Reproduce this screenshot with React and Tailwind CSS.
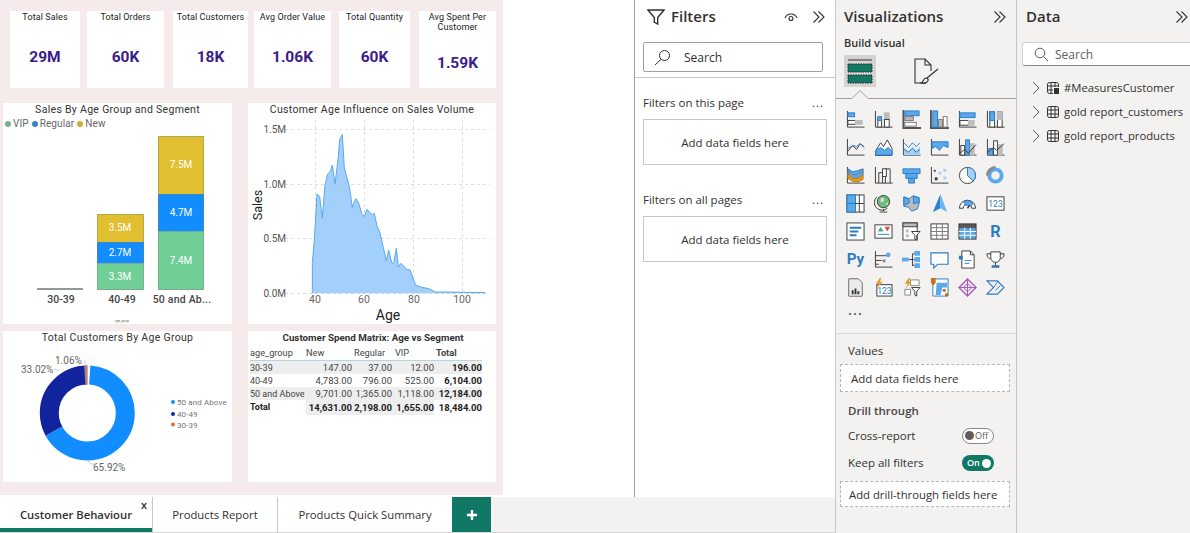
import React from 'react';

const D = '#3b3a39';
const B = '#5ba8ec';
const S = '#2b7cc4';
const G = '#bcbcbc';
const W = '#ffffff';

const Ax = () => <path d="M1.5 1v17h18" fill="none" stroke={D} strokeWidth="1" />;
const Bx = ({ x, y, w, h, f = W, s = D }) => <rect x={x} y={y} width={w} height={h} fill={f} stroke={s} strokeWidth="1" />;

const vizIcons = [
  <><Ax /><Bx x={2} y={3} w={7} h={4} f={B} s={S} /><Bx x={2} y={11} w={8} h={4} /><Bx x={10} y={11} w={7} h={4} f={G} s={G} /></>,
  <><Ax /><Bx x={4} y={9} w={4} h={9} /><Bx x={4} y={7} w={4} h={4} f={B} s={S} /><Bx x={11} y={3} w={5} h={7} f={G} s={G} /><Bx x={11} y={10} w={5} h={8} f={W} s={D} /></>,
  <><path d="M1.5 0v19h19" fill="none" stroke="#555" strokeWidth="2" /><Bx x={3} y={1} w={15} h={5} f={B} s={S} /><Bx x={3} y={7} w={9} h={4} f={G} s="#777" /><Bx x={3} y={13} w={12} h={4} f={W} s="#777" /></>,
  <><path d="M1 0v19h19" fill="none" stroke="#555" strokeWidth="2" /><Bx x={3} y={1} w={5} h={17} f={B} s={S} /><Bx x={9} y={10} w={4} h={8} f={G} s="#777" /><Bx x={14} y={7} w={4} h={11} f={W} s="#777" /></>,
  <><Ax /><Bx x={2} y={3} w={16} h={5} f={B} s={S} /><Bx x={2} y={11} w={9} h={5} /><Bx x={11} y={11} w={6} h={5} f={G} s={G} /></>,
  <><Ax /><Bx x={4} y={2} w={5} h={16} /><Bx x={4} y={2} w={5} h={9} f={B} s={S} /><Bx x={12} y={2} w={5} h={16} /><Bx x={12} y={2} w={5} h={8} f={G} s={G} /></>,
  <><Ax /><path d="M2 14l5-6 4 4 4-6 4 4" fill="none" stroke={D} /><path d="M2 11l5-3 4 1 4-3 4 3" fill="none" stroke={S} /></>,
  <><path d="M1 18h18" stroke={D} /><path d="M2 18v-5l5-8 3 4 4-7 5 9v7z" fill={W} stroke={D} /><path d="M2 18v-5l5-3 4 3 4-3 4 4v4z" fill={B} stroke={S} /></>,
  <><Ax /><path d="M2 10l5 4 4-5 4 4 4-4v9H2z" fill="#a7d0f5" /><path d="M2 5l5 5 4-5 4 4 4-4M2 12l5 3 4-4 4 4 4-3" fill="none" stroke={S} /></>,
  <><Ax /><path d="M2 4h17v6l-5-2-4 5-4-4-4 2z" fill={B} stroke={S} /></>,
  <><Ax /><Bx x={3} y={8} w={4} h={10} f={W} /><Bx x={8} y={2} w={4} h={16} f={B} s={S} /><Bx x={13} y={6} w={4} h={12} f={G} s={G} /><path d="M2 16l5-4 4 4 8-9" fill="none" stroke={D} /></>,
  <><Ax /><Bx x={3} y={11} w={4} h={7} f={B} s={S} /><Bx x={8} y={3} w={4} h={15} f={W} /><Bx x={13} y={7} w={4} h={11} f={G} s={G} /><path d="M2 15l6-5 3 3 8-7" fill="none" stroke={D} /></>,
  <><Ax /><path d="M2 3l5 3 5-1 6-2v6l-6 5-5-1-5-3z" fill={B} stroke={S} /><path d="M2 8l5 5 5 0 6-4v5l-6 3-5-1-5-3z" fill="#e49b2c" stroke="#b87514" /><path d="M2 6l5 3 5 0 6-4" stroke="#777" fill="none" /></>,
  <><Ax /><path d="M5 18V7h4v11M12 18V3h5v15" fill="none" stroke={D} /><Bx x={9} y={3} w={4} h={8} f={W} /></>,
  <><path d="M1 3h18v5H1z" fill={B} stroke={S} /><path d="M4 8h12v5H4z" fill={B} stroke={S} /><path d="M7 13h6v5H7z" fill={B} stroke={S} /></>,
  <><Ax /><g fill="#a7d0f5"><rect x="5" y="12" width="3" height="3" fill={D} /><rect x="9" y="6" width="3" height="3" /><rect x="14" y="3" width="3" height="3" /><rect x="14" y="11" width="3" height="3" /><rect x="4" y="4" width="2" height="2" fill={D} /></g></>,
  <><circle cx="10" cy="10" r="8.5" fill={W} stroke={D} /><path d="M10 10V1.5a8.5 8.5 0 0 1 6 14.5z" fill="#a7d0f5" stroke={S} /></>,
  <><circle cx="10" cy="10" r="6.5" fill="none" stroke={B} strokeWidth="4" /><path d="M10 1.5a8.5 8.5 0 0 0-8.5 8.5" stroke="#888" strokeWidth="3" fill="none" /></>,
  <><Bx x={1} y={1} w={18} h={18} /><Bx x={1} y={1} w={9} h={9} f={B} s={S} /><Bx x={1} y={10} w={9} h={9} f={B} s={S} /><path d="M14 1v9M10 10h9M14 10v9" stroke={D} /></>,
  <><circle cx="10" cy="8" r="6.5" fill="#6dbb78" stroke={D} /><path d="M7 4l4 1-1 3-3 1zM12 10l3-1-1 3z" fill="#ddd" /><path d="M3 3a8 8 0 0 0 11 12M10 16v2M6 19h8" fill="none" stroke={D} /></>,
  <><path d="M2 3l5 2 5-3 6 2v6l-2 6-6 2-3-4-5-1z" fill={G} stroke={S} /><path d="M2 3l5 2 1 4-6 3zM12 2l6 2v5l-6 1z" fill={B} stroke={S} /></>,
  <><path d="M11 0L3 19l8-4z" fill="#2d7fd0" /><path d="M11 0l7 19-7-4z" fill="#6cb4ee" /></>,
  <><path d="M1.5 15a8.5 8.5 0 0 1 17 0h-4a4.5 4.5 0 0 0-9 0z" fill={W} stroke={D} /><path d="M6 8a8.5 8.5 0 0 1 10 2l-3 3a4.5 4.5 0 0 0-5-1z" fill={B} stroke={S} /><path d="M10 15l2-3" stroke={D} strokeWidth="1.5" /></>,
  <><Bx x={1} y={3} w={18} h={14} /><text x="10" y="13.5" textAnchor="middle" fontSize="9" fill={S} fontFamily="Roboto, sans-serif">123</text></>,
  <><Bx x={1} y={1} w={18} h={18} /><path d="M4 6h12M4 10h9M4 14h7" stroke={S} strokeWidth="2" /></>,
  <><Bx x={1} y={3} w={18} h={14} /><path d="M4 10l3-5 3 5z" fill="#4caf7a" /><path d="M11 5h6l-3 5z" fill="#d8504d" /><path d="M4 13h12" stroke={S} /></>,
  <><Bx x={1} y={1} w={15} h={18} /><rect x="1" y="1" width="15" height="4" fill={G} stroke={D} /><path d="M4 8h3v3H4zM4 13h3v3H4z" fill={G} /><path d="M10 10h9l-3.5 4v5l-2-1v-4z" fill={W} stroke={D} /></>,
  <><Bx x={1} y={2} w={18} h={16} /><path d="M1 6h18M1 10h18M1 14h18M7 2v16M13 2v16" stroke="#777" fill="none" /></>,
  <><Bx x={1} y={2} w={18} h={16} f="#5a5a5a" /><path d="M1.5 6.5h17v11h-17z" fill={B} /><path d="M1 10h18M1 14h18M7 6v12M13 6v12" stroke={W} fill="none" /></>,
  <text x="10" y="16" textAnchor="middle" fontSize="17" fontWeight="700" fill="#2b7cc4" fontFamily="Roboto, sans-serif">R</text>,
  <text x="10" y="15" textAnchor="middle" fontSize="16" fontWeight="700" fill="#2b7cc4" fontFamily="Roboto, sans-serif">Py</text>,
  <><path d="M1.5 1v17h18M2 6h11M2 11h6M2 15h3" fill="none" stroke={D} /><circle cx="15" cy="5" r="2.5" fill={B} /><rect x="9" y="10" width="3" height="3" fill="#888" /></>,
  <><path d="M7 10h4M11 4v13M11 4h2M11 10h2M11 16h2" fill="none" stroke={D} /><rect x="0" y="8" width="7" height="4" fill={B} /><rect x="13" y="1" width="6" height="5" fill={B} /><rect x="13" y="7.5" width="6" height="5" fill={B} /><rect x="13" y="14" width="6" height="5" fill={B} /></>,
  <path d="M1 3h18v12H8l-4 4v-4H1z" fill={W} stroke={S} strokeWidth="1.2" />,
  <><path d="M4 1h9l4 4v14H4z" fill={W} stroke={D} /><path d="M13 1v4h4" fill="none" stroke={D} /><rect x="1" y="6" width="4" height="4" fill={S} /><path d="M7 11h7M7 14h5" stroke={S} /></>,
  <><path d="M5 2h10v6a5 5 0 0 1-10 0z" fill={W} stroke={D} /><path d="M5 4H1c0 4 2 5 4 5M15 4h4c0 4-2 5-4 5M10 13v3M6 18h8" fill="none" stroke={D} /><rect x="6" y="16" width="8" height="2" fill={S} /></>,
  <><path d="M3 1h10l4 4v14H3z" fill={W} stroke={D} /><path d="M3 1h10l4 4v14H3z" fill="#ddd" opacity=".6" /><path d="M7 17v-4M10 17v-6M13 17v-3" stroke="#333" strokeWidth="2" /></>,
  <><Bx x={3} y={7} w={16} h={12} /><text x="11" y="16.5" textAnchor="middle" fontSize="9" fill={S} fontFamily="Roboto, sans-serif">123</text><path d="M6 0L2 6h3L3 11l6-7H6l2-4z" fill="#e49b2c" /></>,
  <><path d="M9 2h9v6H9zM3 12h6v6H3z" fill={W} stroke="#888" /><path d="M7 0L3 6h3L4 11l6-7H7l2-4z" fill="#e49b2c" /><path d="M10 10h9l-3.5 4v5l-2-1v-4z" fill={W} stroke={D} /></>,
  <><path d="M3 1h16v18H3z" fill={W} stroke={S} /><path d="M7 5h11v5h-5l-2 8H6z" fill={B} /><path d="M1 0h5v5l-2.5 3L1 5z" fill="#c8701a" /><circle cx="15" cy="13" r="1.8" fill="#c8701a" /><circle cx="17.5" cy="17.5" r="1.8" fill="#c8701a" /></>,
  <><path d="M10 1l9 9-9 9-9-9z" fill="none" stroke="#a259b8" strokeWidth="1.4" /><path d="M10 5.5l4.5 4.5-4.5 4.5L5.500 10zM10 1v18M1 10h18" fill="#efe2f3" stroke="#a259b8" /></>,
  <><path d="M1 3h11l7 7-7 7H1l7-7z" fill="none" stroke={S} strokeWidth="1.2" /><path d="M8 10l5-7M10 13l5-5" stroke={S} /></>,
];

const kpis = [
  { title: 'Total Sales', value: '29M', box: 'w-[70px]' },
  { title: 'Total Orders', value: '60K', box: 'w-[77px] ml-[7px]' },
  { title: 'Total Customers', value: '18K', box: 'w-[75px] ml-[9px]' },
  { title: 'Avg Order Value', value: '1.06K', box: 'w-[77px] ml-[6px]' },
  { title: 'Total Quantity', value: '60K', box: 'w-[71px] ml-[8px]' },
  { title: 'Avg Spent Per Customer', value: '1.59K', box: 'w-[77px] ml-[9px]', low: true },
];

const raw = [[202, 580], [202, 488], [208, 420], [216, 282], [224, 290], [232, 355], [240, 255], [248, 222], [256, 215], [262, 195], [270, 252], [280, 170], [284, 118], [292, 104], [298, 205], [308, 240], [314, 265], [322, 322], [332, 296], [340, 306], [350, 340], [358, 350], [366, 328], [382, 345], [388, 340], [396, 378], [404, 395], [424, 482], [431, 450], [440, 488], [446, 490], [454, 445], [460, 500], [468, 490], [485, 508], [495, 510], [512, 555], [530, 562], [552, 566], [570, 576], [600, 576], [720, 578], [720, 580]];
const areaPts = raw.map(([x, y]) => `${245 + x / 3},${100 + y / 3}`).join(' ');

const matrix = [
  ['30-39', '147.00', '37.00', '12.00', '196.00'],
  ['40-49', '4,783.00', '796.00', '525.00', '6,104.00'],
  ['50 and Above', '9,701.00', '1,365.00', '1,118.00', '12,184.00'],
];

function Chevrons() {
  return (
    <svg width="14" height="14" viewBox="0 0 14 14" fill="none" stroke="#323130" strokeWidth="1.1">
      <path d="M1.500 1.500L7 7l-5.500 5.500M6.500 1.500L12 7l-5.500 5.500" />
    </svg>
  );
}

function Panel({ title, className, children }) {
  return (
    <div className={`bg-white flex flex-col ${className}`}>
      <div className="h-[14px] shrink-0 flex items-center justify-center text-[10.5px] tracking-[0.3px] text-[#333]">{title}</div>
      {children}
    </div>
  );
}

function Report() {
  return (
    <div className="w-[503px] h-[495px] bg-[#f6ebeb] font-['Roboto',sans-serif] overflow-hidden">
      <div className="flex pl-[10px] pt-[11px]">
        {kpis.map((k) => (
          <div key={k.title} className={`${k.box} h-[77px] bg-white flex flex-col items-center text-center`}>
            <div className="h-[33px] w-full pt-[1px] text-[9px] leading-[10px] tracking-[0.1px] text-[#222]">{k.title}</div>
            <div className={`${k.low ? 'mt-[6px]' : ''} text-[15.5px] leading-[26px] font-bold text-[#3b1c8c]`}>{k.value}</div>
          </div>
        ))}
      </div>
      <div className="flex mt-[15px] pl-[3px]">
        <Panel title="Sales By Age Group and Segment" className="w-[229px] h-[221px]">
          <div className="h-[13px] pl-[2px] flex items-center text-[10px] tracking-[0.1px] text-[#666]">
            <span className="w-[6px] h-[6px] rounded-full bg-[#74b48f] mr-[2px]" />VIP
            <span className="w-[6px] h-[6px] rounded-full bg-[#3b82c8] ml-[3px] mr-[2px]" />Regular
            <span className="w-[6px] h-[6px] rounded-full bg-[#c9ae3d] ml-[3px] mr-[2px]" />New
          </div>
          <svg viewBox="3 130 229 194" width="229" height="194" fontFamily="Roboto, sans-serif">
            <rect x="37" y="288" width="46" height="2" fill="#8f9a96" />
            <rect x="97.500" y="214.500" width="46" height="28" fill="#e0c030" stroke="#b7a64a" />
            <rect x="97.500" y="242.500" width="46" height="21" fill="#118dff" stroke="#3f86bb" />
            <rect x="97.500" y="263.500" width="46" height="26" fill="#6fcf97" stroke="#79ad8c" />
            <rect x="158.500" y="136.500" width="45" height="58" fill="#e0c030" stroke="#b7a64a" />
            <rect x="158.500" y="194.500" width="45" height="37" fill="#118dff" stroke="#3f86bb" />
            <rect x="158.500" y="231.500" width="45" height="58" fill="#6fcf97" stroke="#79ad8c" />
            <g fill="#fff" fontSize="10" textAnchor="middle">
              <text x="120" y="231">3.5M</text>
              <text x="120" y="256">2.7M</text>
              <text x="120" y="280">3.3M</text>
              <text x="181" y="168">7.5M</text>
              <text x="181" y="216">4.7M</text>
              <text x="181" y="264">7.4M</text>
            </g>
            <g fill="#444" fontSize="10.500" fontWeight="500" textAnchor="middle">
              <text x="61" y="303">30-39</text>
              <text x="122" y="303">40-49</text>
              <text x="182" y="303" letterSpacing="0.2">50 and Ab...</text>
            </g>
            <text x="122" y="322" fontSize="3" fill="#666" textAnchor="middle">age_group</text>
          </svg>
        </Panel>
        <Panel title="Customer Age Influence on Sales Volume" className="w-[248px] h-[221px] ml-[16px]">
          <svg viewBox="248 117 248 207" width="248" height="207" fontFamily="Roboto, sans-serif">
            <g stroke="#ddd" strokeDasharray="3 3" strokeWidth="1">
              <path d="M285 129.500H490M285 184.500H490M285 238.500H490M285 293.500H490" />
              <path d="M315.500 120V293M364.500 120V293M413.500 120V293M462.500 120V293" />
            </g>
            <polygon points={areaPts} fill="#a3d0fb" />
            <polyline points={areaPts} fill="none" stroke="#5ba7ee" strokeWidth="1" />
            <g fill="#555" fontSize="10" textAnchor="end">
              <text x="286" y="133">1.5M</text>
              <text x="286" y="188">1.0M</text>
              <text x="286" y="242">0.5M</text>
              <text x="286" y="297">0.0M</text>
            </g>
            <g fill="#666" fontSize="10.500" textAnchor="middle">
              <text x="315" y="303">40</text>
              <text x="364" y="303">60</text>
              <text x="414" y="303">80</text>
              <text x="462" y="303">100</text>
            </g>
            <text x="388" y="320" fill="#222" fontSize="14" textAnchor="middle">Age</text>
            <text x="0" y="0" transform="translate(262 205) rotate(-90)" fill="#222" fontSize="12.500" textAnchor="middle">Sales</text>
          </svg>
        </Panel>
      </div>
      <div className="flex mt-[7px] pl-[3px]">
        <Panel title="Total Customers By Age Group" className="w-[229px] h-[151px]">
          <svg viewBox="3 345 229 137" width="229" height="137" fontFamily="Roboto, sans-serif">
            <g transform="rotate(-90 87.300 413)" fill="none" strokeWidth="19">
              <circle cx="87.300" cy="413" r="38" stroke="#118dff" strokeDasharray="157.400 238.800" strokeDashoffset="-2.500" />
              <circle cx="87.300" cy="413" r="38" stroke="#12239e" strokeDasharray="78.800 238.800" strokeDashoffset="-159.900" />
              <circle cx="87.300" cy="413" r="38" stroke="#c47a70" strokeDasharray="2.500 238.800" strokeDashoffset="0" transform="rotate(-3.800 87.300 413)" />
            </g>
            <path d="M54 369l5 2M85 361v3M88 461l3 3h3" stroke="#ccc" fill="none" />
            <g fill="#666" fontSize="10">
              <text x="21" y="373">33.02%</text>
              <text x="55" y="364">1.06%</text>
              <text x="93" y="471">65.92%</text>
            </g>
            <circle cx="173" cy="402" r="2" fill="#118dff" />
            <circle cx="173" cy="414" r="2" fill="#12239e" />
            <circle cx="173" cy="424.500" r="2" fill="#e66c37" />
            <g fill="#777" fontSize="8" letterSpacing="0.1">
              <text x="177" y="405">50 and Above</text>
              <text x="177" y="417">40-49</text>
              <text x="177" y="428">30-39</text>
            </g>
          </svg>
        </Panel>
        <div className="w-[248px] h-[151px] ml-[16px] bg-white pl-[2px] text-[#444]">
          <div className="h-[14px] flex items-center justify-center text-[9.8px] font-bold text-[#333]">Customer Spend Matrix: Age vs Segment</div>
          <div className="w-[232px] h-[16px] grid grid-cols-[56px_47px_41px_41px_47px] items-center border-b border-[#b3d4ea] text-[9.2px]">
            <span>age_group</span><span>New</span><span className="pl-[1px]">Regular</span><span className="pl-[1px]">VIP</span><span className="pl-[1px] font-bold">Total</span>
          </div>
          {matrix.map((r, i) => (
            <div key={r[0]} className={`w-[232px] h-[13px] pt-[1px] grid grid-cols-[56px_46px_40px_42px_48px] items-center text-[9.5px] leading-[12px] ${i !== 1 ? 'bg-[#eeeeee]' : ''}`}>
              <span className="text-[9px] whitespace-nowrap">{r[0]}</span>
              <span className="text-right">{r[1]}</span>
              <span className="text-right">{r[2]}</span>
              <span className="text-right">{r[3]}</span>
              <span className="text-right font-bold text-[#222]">{r[4]}</span>
            </div>
          ))}
          <div className="w-[232px] h-[14px] grid grid-cols-[56px_46px_40px_42px_48px] items-center text-[9.5px] font-bold text-[#222]">
            <span className="text-[9px]">Total</span>
            <span className="text-right bg-[#eeeeee] pt-[1px]">14,631.00</span>
            <span className="text-right bg-[#eeeeee] pt-[1px]">2,198.00</span>
            <span className="text-right bg-[#eeeeee] pt-[1px]">1,655.00</span>
            <span className="text-right pt-[1px]">18,484.00</span>
          </div>
        </div>
      </div>
    </div>
  );
}

function Tabs() {
  return (
    <div className="h-[36px] flex bg-[#f3f2f1] border-b border-[#d8d6d4] font-['Open_Sans',sans-serif] text-[12px] text-[#323130]">
      <div className="relative w-[152px] bg-white border-b-4 border-[#117865] flex items-center justify-center font-semibold text-[11.3px] pt-[5px]">
        Customer Behaviour
        <span className="absolute right-[5px] top-0 text-[11px] leading-[16px] font-semibold">x</span>
      </div>
      <div className="w-[125px] bg-white border-l border-[#c8c6c4] flex items-center justify-center pt-[1px] text-[11.3px]">Products Report</div>
      <div className="w-[175px] bg-white border-l border-[#c8c6c4] flex items-center justify-center pt-[1px] text-[11.3px]">Products Quick Summary</div>
      <div className="w-[39px] bg-[#117865] flex items-center justify-center">
        <svg width="12" height="12" viewBox="0 0 12 12"><path d="M6 1v10M1 6h10" stroke="#fff" strokeWidth="2.400" /></svg>
      </div>
    </div>
  );
}

function DropBox({ className, label }) {
  return <div className={`h-[46px] w-[184px] bg-white border border-[#c8c6c4] flex items-center justify-center pt-[1px] text-[11.5px] text-[#323130] ${className}`}>{label}</div>;
}

function Filters() {
  return (
    <div className="w-[201px] h-[497px] bg-white border-l border-[#a19f9d] font-['Open_Sans',sans-serif] text-[#323130]">
      <div className="h-[33px] flex items-center pl-[12px] pr-[9px]">
        <svg width="18" height="18" viewBox="0 0 18 18" fill="none" stroke="#323130" strokeWidth="1.400"><path d="M1 2h16l-6.300 7.500V16l-3.400-2V9.500z" /></svg>
        <span className="ml-[6px] text-[15px] font-semibold">Filters</span>
        <svg className="ml-auto" width="14" height="14" viewBox="0 0 14 14" fill="none" stroke="#323130" strokeWidth="1.100"><path d="M1 8a6.500 6.500 0 0 1 12 0" /><circle cx="7" cy="8.500" r="2" /></svg>
        <span className="ml-[14px] flex"><Chevrons /></span>
      </div>
      <div className="ml-[8px] mt-[9px] w-[180px] h-[30px] border border-[#a19f9d] rounded-[2px] flex items-center pl-[10px] pt-[1px] text-[12px]">
        <svg width="17" height="17" viewBox="0 0 17 17" fill="none" stroke="#323130" strokeWidth="1"><circle cx="10.500" cy="6.500" r="5" /><path d="M7 10.500L1 16" /></svg>
        <span className="ml-[13px]">Search</span>
      </div>
      <div className="mt-[5px] border-t border-[#c8c6c4]" />
      <div className="mt-[13px] ml-[8px] w-[184px] h-[24px] flex items-center justify-between text-[11.5px]">
        <span>Filters on this page</span><span className="pr-[3px] tracking-[1px] leading-[8px]">...</span>
      </div>
      <DropBox className="mt-[4px] ml-[8px]" label="Add data fields here" />
      <div className="mt-[23px] ml-[8px] w-[184px] h-[24px] flex items-center justify-between text-[11.5px]">
        <span>Filters on all pages</span><span className="pr-[3px] tracking-[1px] leading-[8px]">...</span>
      </div>
      <DropBox className="mt-[4px] ml-[8px]" label="Add data fields here" />
    </div>
  );
}

function Visualizations() {
  return (
    <div className="w-[182px] h-[533px] shrink-0 bg-[#f3f2f1] border-l border-[#c8c6c4] border-r font-['Open_Sans',sans-serif] text-[#323130]">
      <div className="h-[33px] flex items-center pl-[8px] pr-[9px] justify-between">
        <span className="text-[15px] font-semibold">Visualizations</span>
        <Chevrons />
      </div>
      <div className="h-[20px] pl-[8px] flex items-center text-[11px] font-semibold">Build visual</div>
      <div className="mt-[1px] h-[33px] flex items-center pl-[8px]">
        <div className="w-[32px] h-[32px] bg-[#d6d4d2] flex items-center justify-center">
          <svg width="26" height="26" viewBox="0 0 26 26">
            <path d="M1 2h24" stroke="#333" />
            <rect x="1" y="6" width="24" height="8" fill="#117865" stroke="#222" strokeDasharray="1.500 1" />
            <rect x="1" y="17" width="24" height="8" fill="#117865" stroke="#222" strokeDasharray="1.500 1" />
          </svg>
        </div>
        <svg className="ml-[37px]" width="26" height="28" viewBox="0 0 26 28" fill="none" stroke="#323130" strokeWidth="1.100">
          <path d="M13 26H2V2h10l6 6v6M12 2v6h6" />
          <path d="M25 12L14 21M13 21c-3 0-2 4-5 5 4 1 8-1 7-4z" />
        </svg>
      </div>
      <svg className="block" width="180" height="12" viewBox="0 0 180 12" fill="none" stroke="#a19f9d">
        <path d="M0 11.500H16L24 3.500L32 11.500H180" />
      </svg>
      <div className="mt-[6px] ml-[10px] grid grid-cols-[repeat(6,28px)] auto-rows-[28px] items-center">
        {vizIcons.map((ic, i) => <svg key={i} width="19" height="19" viewBox="0 0 20 20">{ic}</svg>)}
      </div>
      <div className="h-[24px] pl-[12px] text-[15px] leading-[16px] tracking-[1px]">...</div>
      <div className="mt-[8px] border-t border-[#dcdad8]" />
      <div className="h-[30px] pl-[12px] pt-[4px] flex items-center text-[11.5px]">Values</div>
      <div className="ml-[4px] w-[170px] h-[28px] bg-white border border-dashed border-[#b8b6b4] flex items-center pl-[10px] pt-[1px] text-[11.5px]">Add data fields here</div>
      <div className="mt-[7px] h-[24px] pl-[12px] flex items-center text-[11.5px] font-semibold text-[#484644]">Drill through</div>
      <div className="h-[25px] pl-[12px] pr-[22px] flex items-center justify-between text-[11.5px]">
        <span>Cross-report</span>
        <span className="w-[32px] h-[16px] rounded-full border border-[#8a8886] bg-white flex items-center pl-[2px] text-[9px] text-[#605e5c]">
          <span className="w-[9px] h-[9px] rounded-full bg-[#605e5c] mr-[1px]" />Off
        </span>
      </div>
      <div className="mt-[2px] h-[26px] pl-[12px] pr-[22px] flex items-center justify-between text-[11.5px]">
        <span>Keep all filters</span>
        <span className="w-[32px] h-[16px] rounded-full bg-[#117865] flex items-center pl-[5px] text-[9px] font-semibold text-white">
          On<span className="w-[9px] h-[9px] rounded-full bg-white ml-[2px]" />
        </span>
      </div>
      <div className="mt-[5px] ml-[4px] w-[170px] h-[26px] bg-white border border-dashed border-[#b8b6b4] flex items-center pl-[8px] pt-[2px] text-[11.3px] whitespace-nowrap">Add drill-through fields here</div>
    </div>
  );
}

function TableIcon({ calc }) {
  return (
    <svg width="14" height="14" viewBox="0 0 14 14" fill="none" stroke="#323130" strokeWidth="1">
      <rect x="1.500" y="1.500" width="11" height="11" rx="2" />
      <path d="M5 1.500v11M9 1.500v11M1.500 5h11M1.500 9h11" />
      {calc && <rect x="7.500" y="6.500" width="6" height="7" fill="#323130" stroke="#f3f2f1" />}
    </svg>
  );
}

function DataPane() {
  const rows = [['#MeasuresCustomer', true], ['gold report_customers', false], ['gold report_products', false]];
  return (
    <div className="flex-1 h-[533px] bg-[#f3f2f1] font-['Open_Sans',sans-serif] text-[#323130] overflow-hidden">
      <div className="h-[33px] flex items-center pl-[9px] pr-[1px] justify-between">
        <span className="text-[15px] font-semibold">Data</span>
        <Chevrons />
      </div>
      <div className="mt-[9px] ml-[5px] w-[180px] h-[24px] bg-white border border-[#d2d0ce] border-b-[#8a8886] rounded-[3px] flex items-center pl-[11px] pt-[1px] text-[12px] text-[#605e5c]">
        <svg width="15" height="15" viewBox="0 0 15 15" fill="none" stroke="#605e5c" strokeWidth="1"><circle cx="6" cy="6" r="4.800" /><path d="M9.500 9.500L14 14" /></svg>
        <span className="ml-[6px]">Search</span>
      </div>
      <div className="mt-[10px]">
        {rows.map(([name, calc]) => (
          <div key={name} className="h-[24px] pl-[15px] flex items-center text-[11.3px] whitespace-nowrap">
            <svg width="8" height="14" viewBox="0 0 8 14" fill="none" stroke="#605e5c" strokeWidth="1"><path d="M1 1l6 6-6 6" /></svg>
            <span className="ml-[6px] flex"><TableIcon calc={calc} /></span>
            <span className="ml-[4px]">{name}</span>
          </div>
        ))}
      </div>
    </div>
  );
}

export default function App() {
  return (
    <div className="w-[1190px] h-[533px] flex overflow-hidden bg-white">
      <div className="w-[835px] shrink-0 flex flex-col">
        <div className="flex h-[497px]">
          <div className="w-[634px] bg-white"><Report /></div>
          <Filters />
        </div>
        <Tabs />
      </div>
      <Visualizations />
      <DataPane />
    </div>
  );
}
